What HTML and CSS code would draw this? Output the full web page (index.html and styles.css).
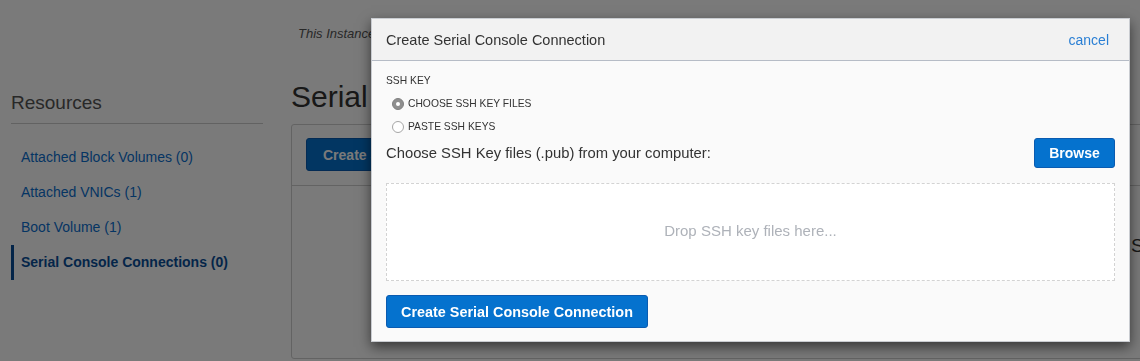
FILE: index.html
```html
<!DOCTYPE html>
<html><head>
<meta http-equiv="Content-Type" content="text/html; charset=utf-8">
<meta name="viewport" content="width=device-width, initial-scale=1">
<title>Serial Console Connections</title>
<link rel="stylesheet" href="styles.css"></head>

<body>
<div class="page">
	<div class="sidebar">
		<h2 class="resTitle">Resources</h2>
		<ul class="resList">
			<li><a href="#">Attached Block Volumes (0)</a></li>
			<li><a href="#">Attached VNICs (1)</a></li>
			<li><a href="#">Boot Volume (1)</a></li>
			<li class="active"><a href="#">Serial Console Connections (0)</a></li>
		</ul>
	</div>
	<div class="main">
		<p class="note">This Instance's serial console connections are listed below.</p>
		<h1 class="mainTitle">Serial Console Connections</h1>
		<div class="panel">
			<div class="panelBar">
				<button class="darkBtn">Create Serial Console Connection</button>
			</div>
			<div class="panelEmpty">Serial Console Connections</div>
		</div>
	</div>
</div>

<!-- dimmed backdrop behind the dialog -->
<div class="overlay"></div>

<div class="modal">
	<div class="modalHead">
		<span class="modalTitle">Create Serial Console Connection</span>
		<a href="#" class="cancel">cancel</a>
	</div>
	<div class="modalBody">
		<div class="fieldLabel">SSH KEY</div>
		<label class="radioRow first"><span class="radio checked"></span>CHOOSE SSH KEY FILES</label>
		<label class="radioRow"><span class="radio"></span>PASTE SSH KEYS</label>
		<div class="chooseRow">
			<span>Choose SSH Key files (.pub) from your computer:</span>
			<button class="button">Browse</button>
		</div>
		<div class="dropZone">Drop SSH key files here...</div>
		<button class="button bigBtn">Create Serial Console Connection</button>
	</div>
</div>
</body>
</html>
```

FILE: styles.css
```css
/* body: fixed size window, helvetica-like font */
body {
	margin: 0;
	width: 1140px;
	height: 361px;
	overflow: hidden;
	background-color: #ffffff;
	font-family: "Liberation Sans", Arial, sans-serif;
	color: #333333;
}

.page {
	display: flex;
	padding-left: 11px;
}

/* left resource menu */
.sidebar {
	width: 252px;
	flex: none;
	padding-top: 90px;
}
.resTitle {
	margin: 0;
	font-size: 19px;
	font-weight: normal;
	line-height: 26px;
	color: #555555;
	padding-bottom: 7px;
	border-bottom: 1px solid #cccccc;
}
.resList {
	list-style: none;
	margin: 16px 0 0 0;
	padding: 0;
}
.resList li {
	height: 35px;
	line-height: 35px;
	padding-left: 10px;
	font-size: 14px;
	border-left: 3px solid transparent;
}
.resList li a {
	color: #0b6fd0;
	text-decoration: none;
	margin-left: -3px;
}
.resList li.active {
	border-left-color: #0a4f9a;
	font-weight: bold;
}
.resList li.active a {
	color: #0a4f9a;
}

/* main column */
.main {
	flex: none;
	width: 900px;
	margin-left: 28px;
}
.note {
	margin: 26px 0 0 7px;
	font-size: 13px;
	font-style: italic;
	color: #555555;
	line-height: 16px;
}
.mainTitle {
	margin: 37px 0 0 0;
	font-size: 30px;
	font-weight: normal;
	line-height: 36px;
	color: #333333;
}
.panel {
	margin-top: 9px;
	height: 233px;
	border: 1px solid #d0d0d0;
	border-radius: 3px;
}
.panelBar {
	padding: 13px 14px 14px 14px;
	border-bottom: 1px solid #d0d0d0;
}
.darkBtn {
	background-color: #0572ce;
	color: #ffffff;
	border: 1px solid #0a5bb0;
	border-radius: 3px;
	height: 33px;
	padding: 0 16px;
	font-family: inherit;
	font-size: 14px;
	font-weight: bold;
}
.panelEmpty {
	padding: 49px 0 0 839px;
	font-size: 19px;
	white-space: nowrap;
	color: #333333;
}

.overlay {
	position: fixed;
	top: 0; left: 0; right: 0; bottom: 0;
	background-color: rgba(0, 0, 0, .52);
}

/* dialog */
.modal {
	position: absolute;
	left: 371px;
	top: 18px;
	width: 759px;
	height: 324px;
	background-color: #fafafa;
	border: 1px solid #c9ccd1;
	box-sizing: border-box;
	box-shadow: 0 5px 12px rgba(0, 0, 0, .55);
}
.modalHead {
	display: flex;
	align-items: center;
	justify-content: space-between;
	height: 41px;
	padding: 0 20px 0 14px;
	background-color: #f2f2f2;
	border-bottom: 1px solid #b6bcc6;
}
.modalTitle {
	font-size: 14.5px;
	color: #333333;
}
.cancel {
	font-size: 14px;
	color: #2a7fd4;
	text-decoration: none;
}
.modalBody {
	padding: 13px 14px 0 14px;
}
.fieldLabel {
	font-size: 10.3px;
	line-height: 14px;
	color: #333333;
}
.radioRow {
	display: flex;
	align-items: center;
	height: 23px;
	padding-left: 6px;
	font-size: 10.3px;
	color: #333333;
}
.radioRow.first {
	margin-top: 4px;
}
.radio {
	width: 12px;
	height: 12px;
	box-sizing: border-box;
	border-radius: 50%;
	border: 1px solid #a6a6a6;
	background-color: #ffffff;
	margin-right: 4px;
	display: flex;
	align-items: center;
	justify-content: center;
}
.radio.checked {
	background-color: #8e8e8e;
	border-color: #808080;
}
.radio.checked::after {
	content: "";
	width: 4px;
	height: 4px;
	border-radius: 50%;
	background-color: #ffffff;
}
.chooseRow {
	display: flex;
	align-items: center;
	justify-content: space-between;
	margin-top: 0;
	font-size: 14.8px;
	color: #333333;
}

.button {
	background-color: #0572ce;
	color: #ffffff;
	border: 1px solid #0a5bb0;
	border-radius: 3px;
	font-family: inherit;
	font-size: 14px;
	font-weight: bold;
	height: 30px;
	padding: 0 14px;
	width: 81px;
}
.bigBtn {
	width: 262px;
	height: 33px;
	margin-top: 14px;
	font-size: 14.4px;
}

.dropZone {
	margin-top: 15px;
	height: 98px;
	box-sizing: border-box;
	border: 1px dashed #d3d3d3;
	background-color: #ffffff;
	display: flex;
	align-items: center;
	justify-content: center;
	padding-bottom: 3px;
	font-size: 15px;
	color: #aeb2b9;
}
```
